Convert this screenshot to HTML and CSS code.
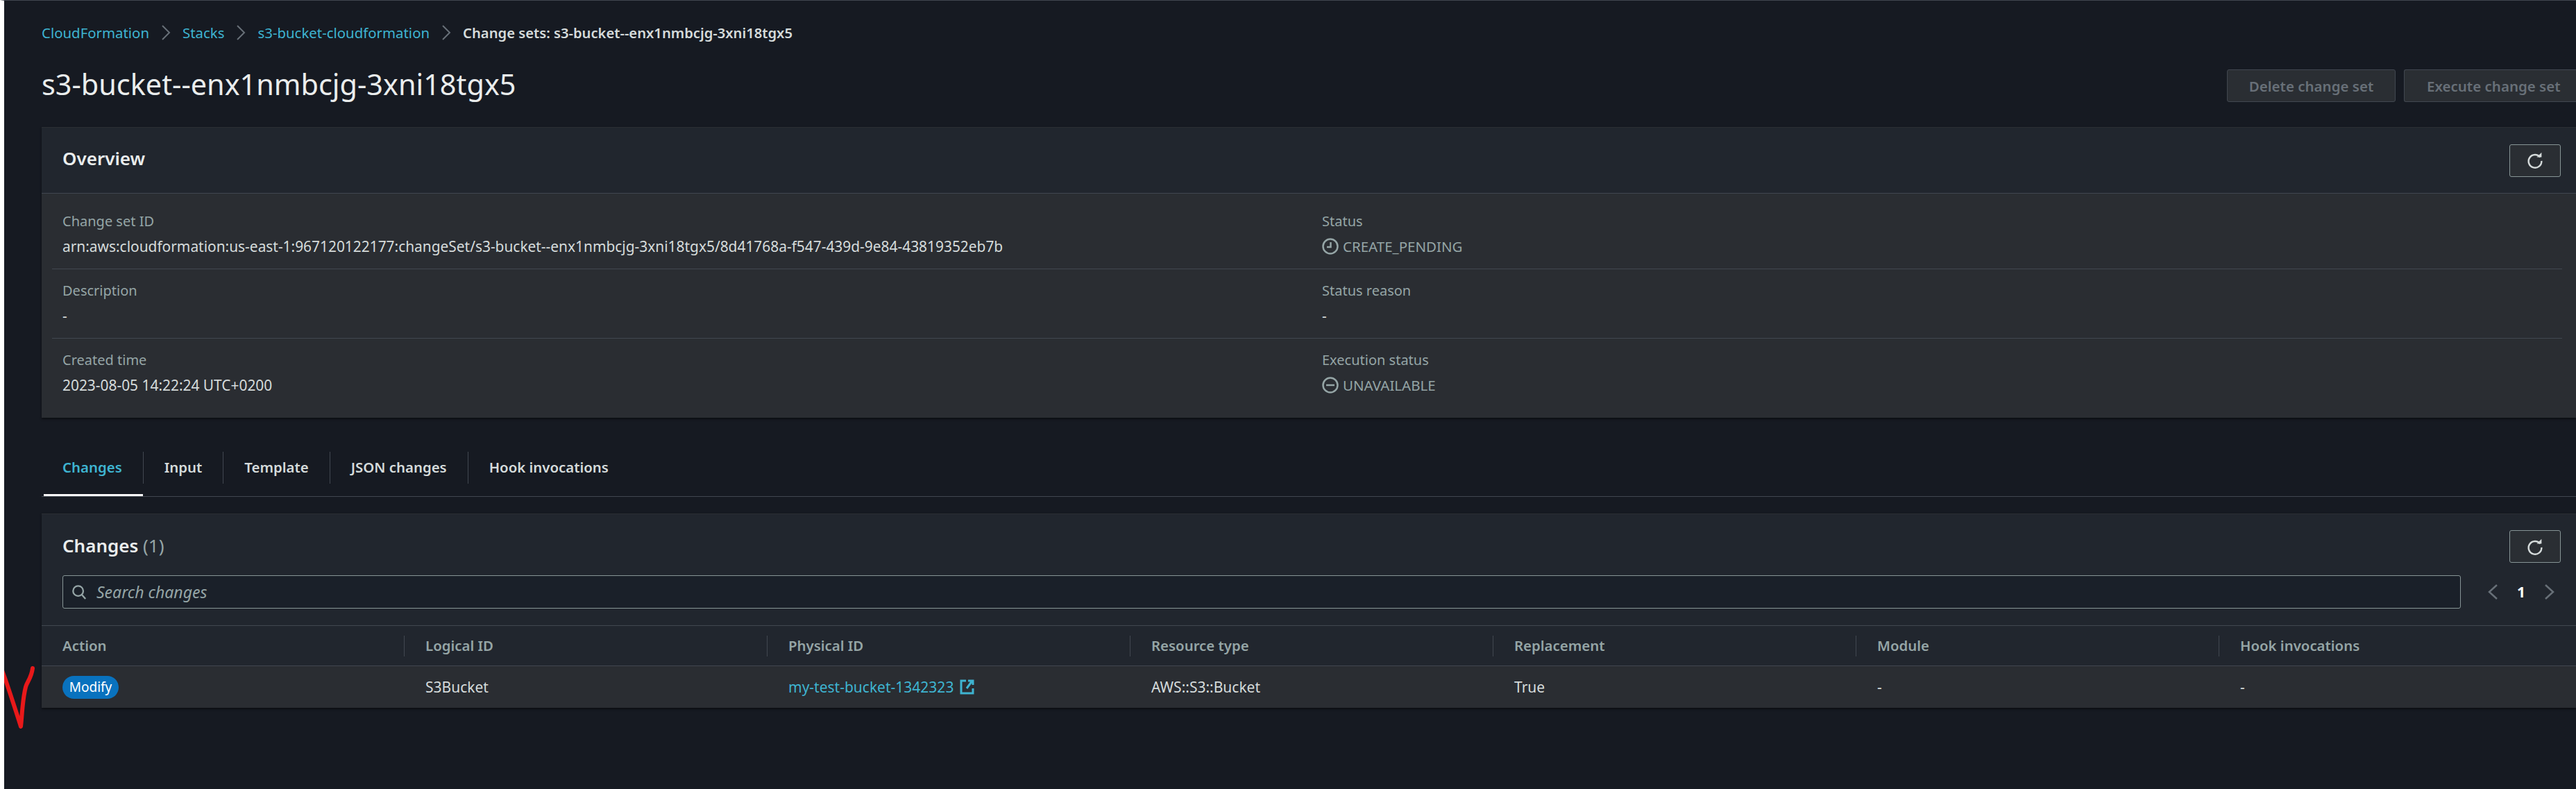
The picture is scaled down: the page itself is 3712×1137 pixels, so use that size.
FILE: index.html
```html
<!DOCTYPE html>
<html lang="en">
<head>
<meta charset="UTF-8">
<title>Change set - CloudFormation</title>
<link rel="stylesheet" href="styles.css">
</head>
<body>
<div class="page">
    <nav class="breadcrumbs">
        <a href="#">CloudFormation</a>
        <svg class="crumb-sep" viewBox="0 0 14 22"><path d="M2 1l10 10L2 21"/></svg>
        <a href="#">Stacks</a>
        <svg class="crumb-sep" viewBox="0 0 14 22"><path d="M2 1l10 10L2 21"/></svg>
        <a href="#">s3-bucket-cloudformation</a>
        <svg class="crumb-sep" viewBox="0 0 14 22"><path d="M2 1l10 10L2 21"/></svg>
        <span class="crumb-current">Change sets: s3-bucket--enx1nmbcjg-3xni18tgx5</span>
    </nav>

    <div class="title-row">
        <h1>s3-bucket--enx1nmbcjg-3xni18tgx5</h1>
        <div class="title-actions">
            <button class="btn-disabled delete-btn">Delete change set</button>
            <button class="btn-disabled execute-btn">Execute change set</button>
        </div>
    </div>

    <section class="card overview">
        <div class="card-head">
            <h2>Overview</h2>
            <button class="btn-refresh">
                <svg viewBox="0 0 32 32"><path d="M25 10.5A11.5 11.5 0 1 0 27.5 17"/><path class="solid" d="M19 10.5h8.5V2z"/></svg>
            </button>
        </div>
        <div class="overview-body">
            <div class="detail-row">
                <div>
                    <div class="detail-label">Change set ID</div>
                    <div class="detail-value">arn:aws:cloudformation:us-east-1:967120122177:changeSet/s3-bucket--enx1nmbcjg-3xni18tgx5/8d41768a-f547-439d-9e84-43819352eb7b</div>
                </div>
                <div>
                    <div class="detail-label">Status</div>
                    <div class="detail-value status">
                        <svg viewBox="0 0 24 24"><circle cx="12" cy="12" r="10.5"/><path d="M12.5 6v7H7"/></svg>
                        CREATE_PENDING
                    </div>
                </div>
            </div>
            <div class="detail-row">
                <div>
                    <div class="detail-label">Description</div>
                    <div class="detail-value">-</div>
                </div>
                <div>
                    <div class="detail-label">Status reason</div>
                    <div class="detail-value">-</div>
                </div>
            </div>
            <div class="detail-row last">
                <div>
                    <div class="detail-label">Created time</div>
                    <div class="detail-value">2023-08-05 14:22:24 UTC+0200</div>
                </div>
                <div>
                    <div class="detail-label">Execution status</div>
                    <div class="detail-value status">
                        <svg viewBox="0 0 24 24"><circle cx="12" cy="12" r="10.5"/><path d="M6 12h12"/></svg>
                        UNAVAILABLE
                    </div>
                </div>
            </div>
        </div>
    </section>

    <div class="tabs">
        <a class="tab active" href="#">Changes</a>
        <a class="tab" href="#">Input</a>
        <a class="tab" href="#">Template</a>
        <a class="tab" href="#">JSON changes</a>
        <a class="tab last" href="#">Hook invocations</a>
    </div>

    <section class="card changes">
        <div class="changes-head">
            <h2>Changes <span class="count">(1)</span></h2>
            <button class="btn-refresh">
                <svg viewBox="0 0 32 32"><path d="M25 10.5A11.5 11.5 0 1 0 27.5 17"/><path class="solid" d="M19 10.5h8.5V2z"/></svg>
            </button>
        </div>
        <div class="filter-row">
            <div class="search-box">
                <svg viewBox="0 0 24 24"><circle cx="10.5" cy="10.5" r="8"/><path d="M16 16l6 7"/></svg>
                <span>Search changes</span>
            </div>
            <div class="pager">
                <svg viewBox="0 0 16 24"><path d="M14 2L3 12l11 10"/></svg>
                <span class="page-num">1</span>
                <svg viewBox="0 0 16 24"><path d="M2 2l11 10L2 22"/></svg>
            </div>
        </div>
        <div class="table-row table-head">
            <div class="cell">Action</div>
            <div class="cell">Logical ID</div>
            <div class="cell">Physical ID</div>
            <div class="cell">Resource type</div>
            <div class="cell">Replacement</div>
            <div class="cell">Module</div>
            <div class="cell">Hook invocations</div>
        </div>
        <div class="table-row table-body">
            <div class="cell"><span class="badge">Modify</span></div>
            <div class="cell">S3Bucket</div>
            <div class="cell">
                <a class="ext-link" href="#">my-test-bucket-1342323
                    <svg viewBox="0 0 21 22"><path d="M9 2H2v18h17v-7M10 13L18 2M12 2h7v6"/></svg>
                </a>
            </div>
            <div class="cell">AWS::S3::Bucket</div>
            <div class="cell">True</div>
            <div class="cell">-</div>
            <div class="cell">-</div>
        </div>
    </section>
</div>

<svg class="red-check" viewBox="0 0 56 96"><path d="M3 6C12 30 22 62 30 87C32 70 32 50 37 30C39 22 45 18 47 3"/></svg>
</body>
</html>
```

FILE: styles.css
```css
* {
    box-sizing: border-box;
}

body {
    margin: 0;
    width: 3712px;
    height: 1137px;
    overflow: hidden;
    position: relative;
    background-color: #161a22;
    border-left: 6px solid #fff;
    border-top: 1px solid #414750;
    font-family: "Noto Sans", sans-serif;
    font-size: 20px;
    color: #d5dbdb;
}

a {
    color: #3eb4d1;
    text-decoration: none;
}

h1, h2 {
    margin: 0;
}

.page {
    padding-left: 54px;
}

.breadcrumbs {
    display: flex;
    align-items: center;
    height: 32px;
    margin-top: 30px;
    font-size: 20.4px;
}

.crumb-sep {
    width: 14px;
    height: 22px;
    margin: 0 17px;
    fill: none;
    stroke: #687078;
    stroke-width: 2;
}

.crumb-current {
    font-size: 20.2px;
    font-weight: 600;
    color: #d5dbdb;
}

.title-row {
    display: flex;
    justify-content: space-between;
    align-items: center;
    height: 64px;
    margin-top: 26px;
}

.title-row h1 {
    font-size: 41.4px;
    font-weight: 400;
    color: #eaeded;
    white-space: nowrap;
}

.title-actions {
    display: flex;
    gap: 12px;
    flex-shrink: 0;
    margin-top: 5px;
}

.btn-disabled {
    height: 47px;
    padding: 0;
    border: 1px solid #414750;
    border-radius: 3px;
    background-color: #2a2e33;
    color: #687078;
    font-family: "Noto Sans", sans-serif;
    font-size: 20.5px;
    font-weight: 600;
}

.delete-btn {
    width: 243px;
}

.execute-btn {
    width: 248px;
    padding-left: 32px;
    border-right: none;
    border-radius: 3px 0 0 3px;
    text-align: left;
    white-space: nowrap;
}

.card {
    background-color: #21262e;
    width: 3652px;
    overflow: hidden;
    box-shadow: 0 2px 3px rgba(0, 0, 0, 0.5);
}

.overview {
    margin-top: 30px;
}

.card-head {
    display: flex;
    justify-content: space-between;
    align-items: center;
    height: 96px;
    padding: 0 22px 0 30px;
    border-top: 1px solid #2a2e33;
    border-bottom: 1px solid #414750;
}

.card-head h2 {
    margin-bottom: 6px;
}

.card h2 {
    font-size: 26px;
    font-weight: 600;
    color: #eaeded;
}

.btn-refresh {
    display: flex;
    align-items: center;
    justify-content: center;
    width: 74px;
    height: 47px;
    padding: 0;
    border: 1px solid #879596;
    border-radius: 3px;
    background-color: #2a2e33;
}

.btn-refresh svg {
    width: 26px;
    height: 26px;
    fill: none;
    stroke: #d5dbdb;
    stroke-width: 3;
}

.btn-refresh .solid {
    fill: #d5dbdb;
    stroke: none;
}

.overview-body {
    background-color: #2a2d32;
    padding: 9px 0 0 15px;
    height: 323px;
}

.detail-row {
    display: grid;
    grid-template-columns: 1815px 1fr;
    height: 100px;
    margin-right: 20px;
    padding: 19px 15px 0;
    border-bottom: 1px solid #414750;
}

.detail-row.last {
    border-bottom: none;
}

.detail-label {
    line-height: 24px;
    color: #95a5a6;
}

.detail-value {
    margin-top: 12px;
    line-height: 24px;
    font-size: 20.9px;
    color: #d5dbdb;
    white-space: nowrap;
}

.status {
    display: flex;
    align-items: center;
    gap: 6px;
    font-size: 20.5px;
    color: #95a5a6;
}

.status svg {
    width: 24px;
    height: 24px;
    fill: none;
    stroke: #95a5a6;
    stroke-width: 2.5;
}

.tabs {
    display: flex;
    height: 67px;
    margin-top: 47px;
    border-bottom: 1px solid #414750;
}

.tab {
    display: flex;
    align-items: center;
    height: 46px;
    margin-top: 2px;
    padding: 0 30px 3px;
    border-right: 1px solid #414750;
    font-size: 20.4px;
    font-weight: 600;
    color: #d5dbdb;
}

.tab.last {
    border-right: none;
}

.tab.active {
    position: relative;
    color: #3eb4d1;
}

.tab.active::after {
    content: "";
    position: absolute;
    left: 3px;
    right: 0;
    bottom: -18px;
    height: 3px;
    background-color: #fff;
}

.changes {
    margin-top: 24px;
    height: 280px;
    box-shadow: inset 0 1px 0 #2a2e33, 0 2px 3px rgba(0, 0, 0, 0.5);
}

.changes-head {
    display: flex;
    justify-content: space-between;
    align-items: flex-start;
    height: 89px;
    padding: 24px 22px 0 30px;
}

.changes-head h2 {
    line-height: 44px;
}

.count {
    font-weight: 400;
    color: #95a5a6;
}

.filter-row {
    display: flex;
    align-items: flex-start;
    height: 73px;
    padding-left: 30px;
    border-bottom: 1px solid #414750;
}

.search-box {
    display: flex;
    align-items: center;
    gap: 14px;
    width: 3456px;
    height: 48px;
    padding-left: 12px;
    border: 1px solid #879596;
    border-radius: 3px;
    background-color: #1a2029;
}

.search-box svg {
    width: 22px;
    height: 24px;
    fill: none;
    stroke: #95a5a6;
    stroke-width: 2.5;
}

.search-box span {
    font-size: 23px;
    font-style: italic;
    color: #95a5a6;
}

.pager {
    display: flex;
    align-items: center;
    gap: 27px;
    height: 48px;
    margin-left: 38px;
}

.pager svg {
    width: 16px;
    height: 24px;
    fill: none;
    stroke: #687078;
    stroke-width: 2.5;
}

.page-num {
    font-size: 21px;
    font-weight: 700;
    color: #fff;
}

.table-row {
    display: grid;
    grid-template-columns: repeat(6, 523px) 1fr;
}

.table-head {
    height: 58px;
    border-bottom: 1px solid #414750;
    align-items: center;
    font-size: 20.4px;
    font-weight: 600;
    color: #95a5a6;
}

.table-head .cell {
    height: 30px;
    line-height: 29px;
    border-right: 1px solid #414750;
}

.table-head .cell:last-child {
    border-right: none;
}

.table-body {
    height: 60px;
    align-items: center;
    background-color: #2a2d32;
    font-size: 21px;
    color: #d5dbdb;
}

.cell {
    padding-left: 30px;
    white-space: nowrap;
}

.badge {
    display: inline-block;
    width: 81px;
    height: 33px;
    border-radius: 17px;
    background-color: #0972be;
    color: #fff;
    font-size: 19px;
    line-height: 32px;
    text-align: center;
}

.ext-link {
    display: inline-flex;
    align-items: center;
    gap: 9px;
}

.ext-link svg {
    width: 21px;
    height: 22px;
    fill: none;
    stroke: #3eb4d1;
    stroke-width: 3;
}

.red-check {
    position: absolute;
    left: -6px;
    top: 959px;
    width: 56px;
    height: 96px;
    fill: none;
    stroke: #e8191a;
    stroke-width: 6;
    stroke-linecap: round;
    stroke-linejoin: round;
}
```
